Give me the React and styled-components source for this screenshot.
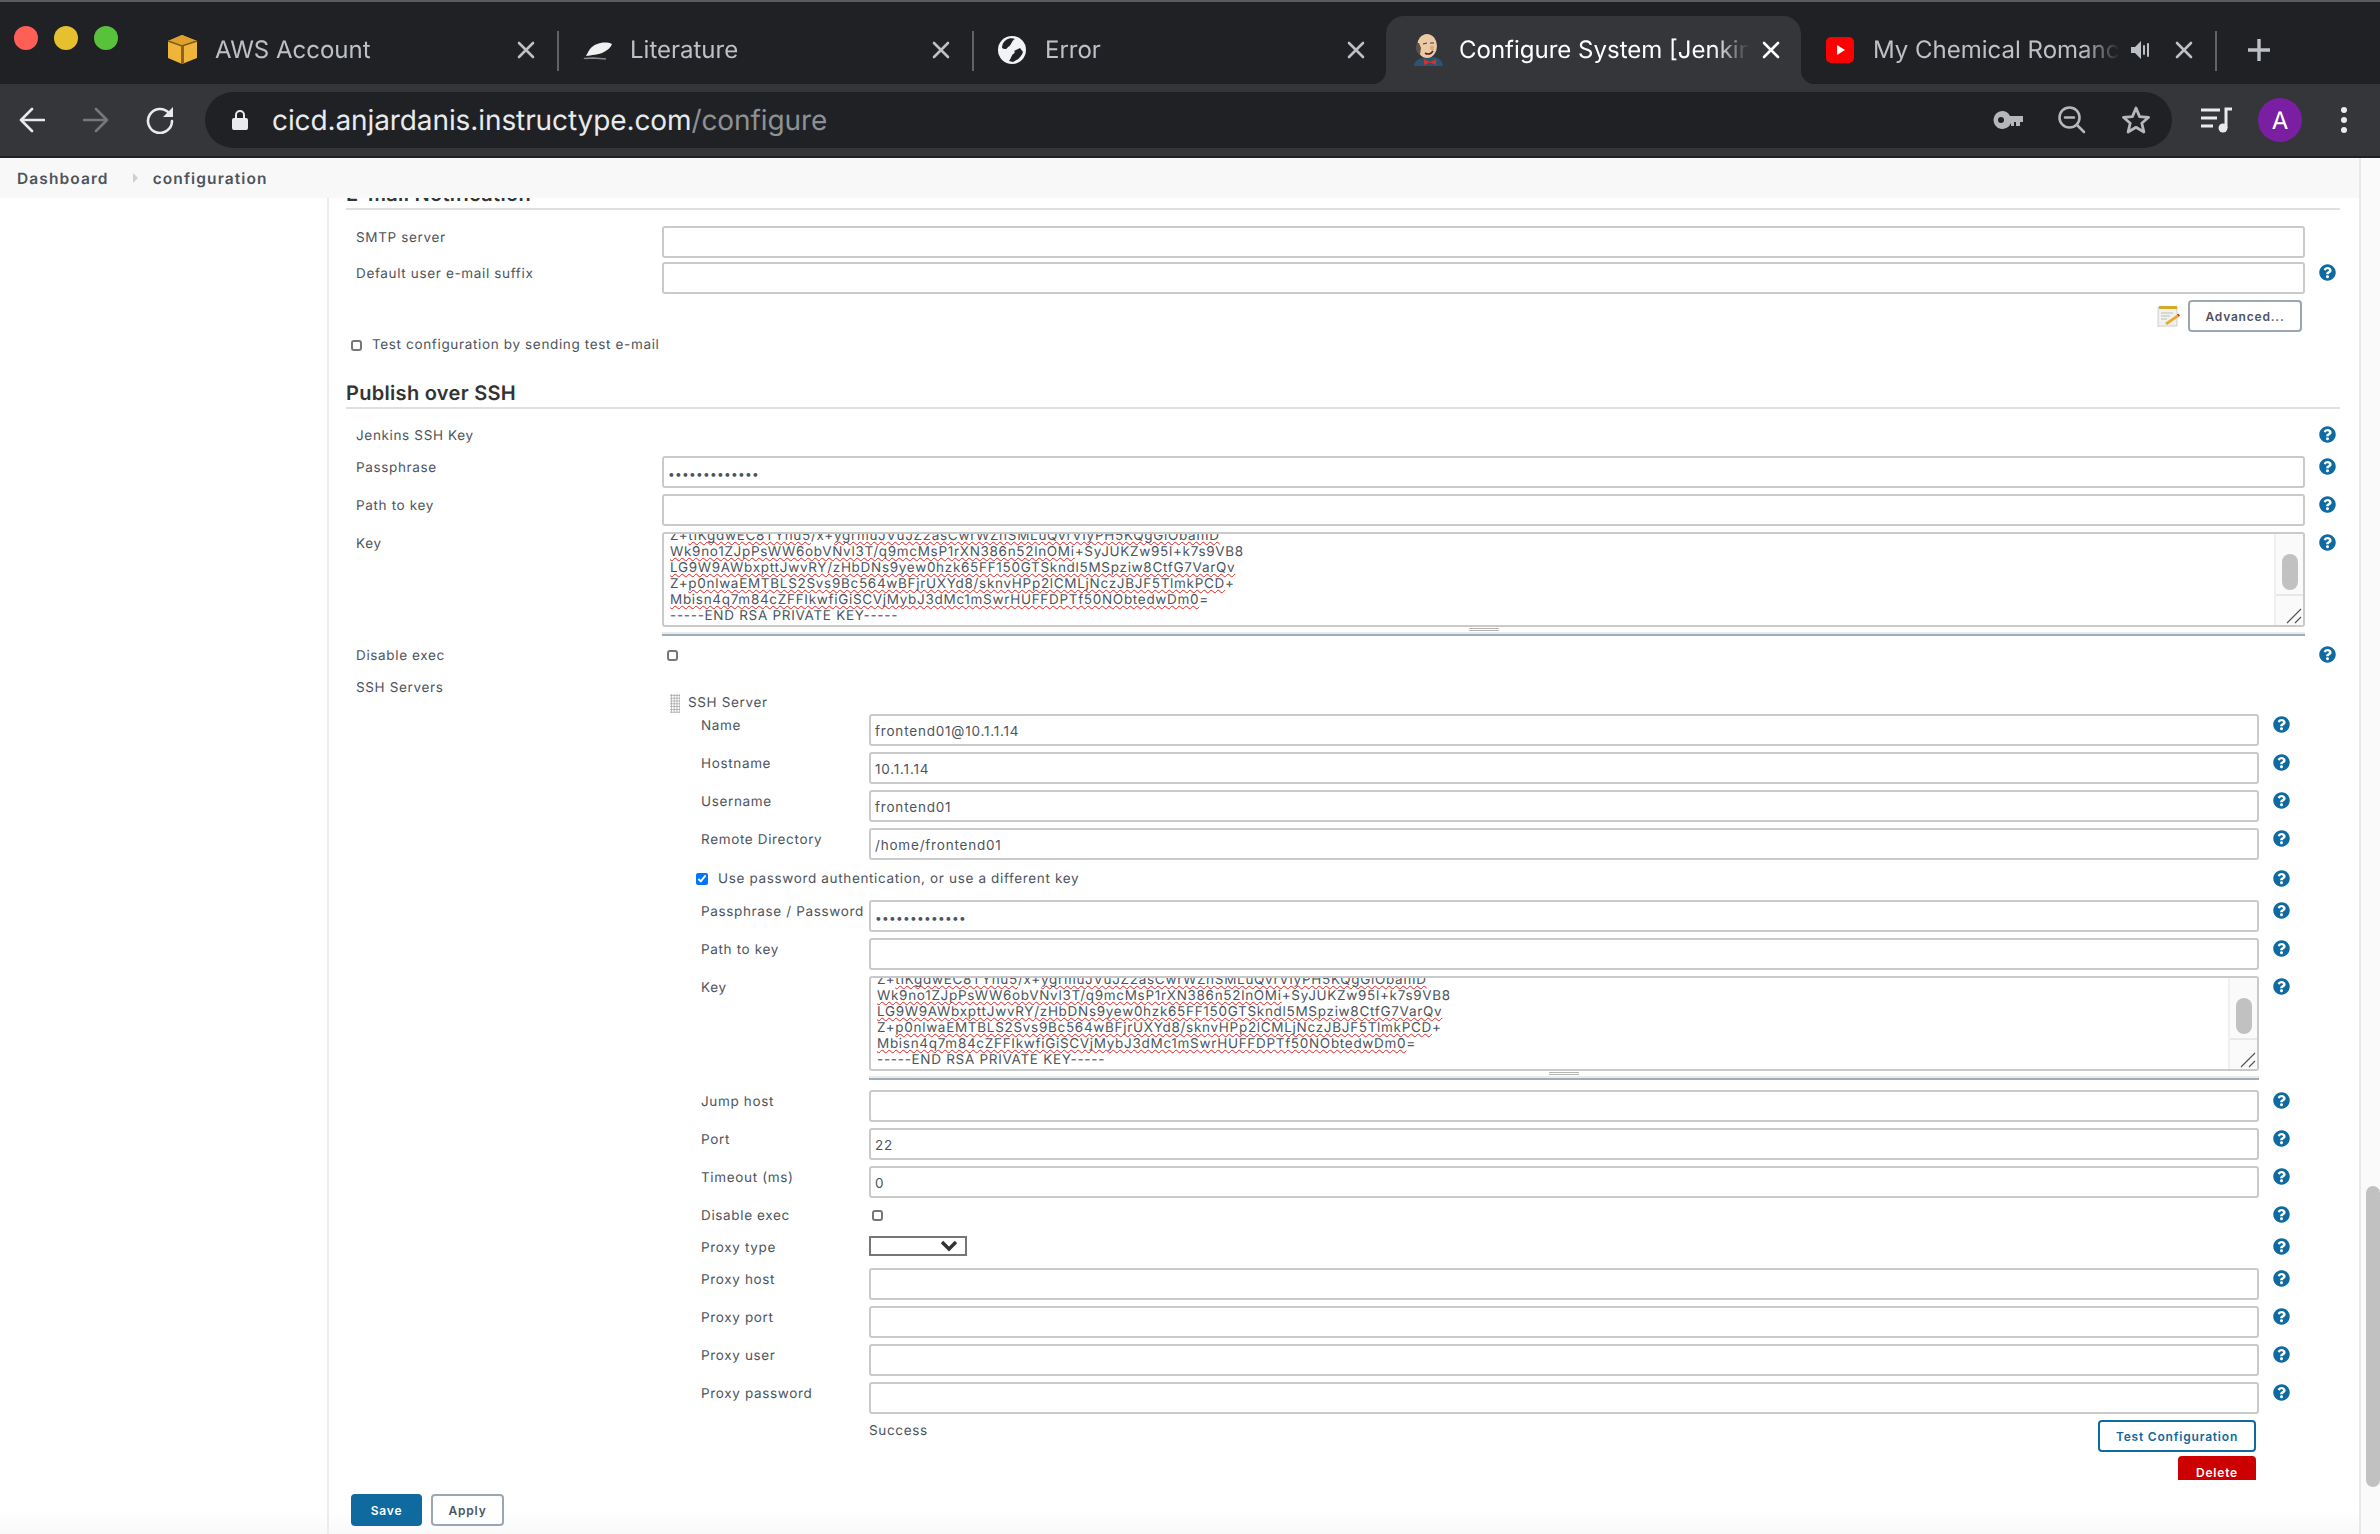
import React from 'react'
import styled, { createGlobalStyle } from 'styled-components'
import { FaQuestionCircle } from 'react-icons/fa'

const GlobalStyle = createGlobalStyle`
  html, body { margin: 0; padding: 0; background: #fff; }
  body {
    width: 2380px;
    height: 1534px;
    overflow: hidden;
    font-family: Inter, Roboto, "Liberation Sans", sans-serif;
    text-rendering: geometricPrecision;
  }
  * { box-sizing: border-box; }
`

const Window = styled.div`
  width: 2380px;
  height: 1534px;
  display: flex;
  flex-direction: column;
  overflow: hidden;
`

/* ---------- browser chrome ---------- */
const TabStrip = styled.div`
  height: 84px;
  flex: none;
  display: flex;
  align-items: flex-end;
  background: #202124;
  border-top: 2px solid #5c5c5e;
`
const Lights = styled.div`
  width: 141px;
  height: 66px;
  flex: none;
  display: flex;
  align-items: center;
  gap: 16px;
  padding: 0 0 26px 14px;
`
const Light = styled.span`
  width: 24px;
  height: 24px;
  border-radius: 50%;
  background: ${p => p.$color};
`
const Tab = styled.div`
  position: relative;
  width: ${p => p.$w || 415}px;
  height: 68px;
  flex: none;
  display: flex;
  align-items: center;
  padding: 0 20px 0 ${p => p.$left || 27}px;
  border-radius: 18px 18px 0 0;
  background: ${p => (p.$active ? '#35363a' : 'transparent')};
  color: ${p => (p.$active ? '#ffffff' : '#bdc1c6')};
  ${p =>
    p.$sep &&
    `&::after {
      content: '';
      position: absolute;
      right: -3px;
      top: 15px;
      height: 40px;
      width: 2px;
      background: #5f6368;
    }`}
  ${p =>
    p.$active &&
    `&::before {
      content: '';
      position: absolute;
      left: -14px;
      right: -14px;
      bottom: 0;
      height: 14px;
      background:
        radial-gradient(circle at 0 0, #202124 14px, #35363a 14.5px) left bottom / 14px 14px no-repeat,
        radial-gradient(circle at 100% 0, #202124 14px, #35363a 14.5px) right bottom / 14px 14px no-repeat;
    }`}
`
const Favicon = styled.svg`
  width: 28px;
  height: 32px;
  flex: none;
  margin-right: 19px;
  position: relative;
  overflow: visible;
`
const TabTitle = styled.span`
  flex: 1;
  min-width: 0;
  font-size: 24px;
  line-height: 32px;
  white-space: nowrap;
  overflow: hidden;
  position: relative;
  -webkit-mask-image: linear-gradient(to right, #000 calc(100% - 36px), transparent 100%);
  mask-image: linear-gradient(to right, #000 calc(100% - 36px), transparent 100%);
`
const TabIcon = styled.svg`
  width: 20px;
  height: 24px;
  flex: none;
  position: relative;
  margin-left: ${p => p.$gap || 12}px;
`
const Toolbar = styled.div`
  height: 74px;
  flex: none;
  display: flex;
  align-items: flex-start;
  padding-top: 8px;
  background: #35363a;
  border-bottom: 2px solid #202124;
`
const NavBtn = styled.span`
  width: ${p => p.$w || 64}px;
  height: 56px;
  flex: none;
  display: flex;
  align-items: center;
  justify-content: center;
  color: ${p => p.$color || '#e8eaed'};
`
const NewTab = styled(NavBtn)`
  align-self: flex-start;
  margin-top: 20px;
`
const Omnibox = styled.div`
  width: 1967px;
  height: 56px;
  margin-left: 13px;
  flex: none;
  display: flex;
  align-items: center;
  padding: 0 4px 0 27px;
  border-radius: 28px;
  background: #202124;
`
const Url = styled.div`
  flex: 1;
  margin-left: 24px;
  font-size: 28px;
  letter-spacing: -0.1px;
  color: #e8eaed;
  white-space: nowrap;
  span { color: #8d9196; }
`
const ToolRight = styled.div`
  margin-left: 12px;
  display: flex;
`
const Avatar = styled.span`
  width: 44px;
  height: 44px;
  border-radius: 50%;
  display: flex;
  align-items: center;
  justify-content: center;
  background: #7b1fa2;
  color: #fff;
  font-size: 24px;
`

/* ---------- page ---------- */
const PageArea = styled.div`
  flex: 1;
  min-height: 0;
  display: flex;
`
const Page = styled.div`
  flex: 1;
  min-width: 0;
  display: flex;
  flex-direction: column;
`
const ScrollTrack = styled.div`
  width: 21px;
  flex: none;
  padding: 1028px 0 0 5px;
  background: #fafafa;
  border-left: 2px solid #e8e8e8;
`
const ScrollThumb = styled.div`
  width: 14px;
  height: 301px;
  border-radius: 7px;
  background: #c1c1c1;
`
const Breadcrumbs = styled.div`
  height: 40px;
  flex: none;
  display: flex;
  align-items: center;
  padding-left: 17px;
  background: #f8f8f8;
  color: #4d545d;
  font-size: 15.5px;
  font-weight: 600;
  letter-spacing: 1.1px;
`
const CrumbSep = styled.svg`
  width: 5px;
  height: 10px;
  margin: 0 15px 0 24px;
`
const Body = styled.div`
  flex: 1;
  min-height: 0;
  display: flex;
  overflow: hidden;
  background: linear-gradient(to bottom, #fff calc(100% - 24px), #f9f9f9 100%);
`
const Side = styled.div`
  width: 329px;
  flex: none;
  border-right: 2px solid #e9edf0;
`
const Content = styled.div`
  flex: 1;
  min-width: 0;
  padding: 0 19px 0 17px;
  color: #4d545d;
  font-size: 13.5px;
  letter-spacing: 0.65px;
`
const SectionTitle = styled.h3`
  height: 31px;
  margin: ${p => p.$top}px 0 0;
  font-size: 20px;
  font-weight: 600;
  line-height: 31px;
  letter-spacing: 0.3px;
  color: #333;
  border-bottom: 2px solid #e0e0e0;
`
const Row = styled.div`
  display: grid;
  grid-template-columns: ${p => (p.$nested ? '207px minmax(0, 1fr) 81px' : '316px minmax(0, 1fr) 35px')};
  min-height: 22px;
  margin-top: ${p => p.$top ?? 6}px;
`
const Label = styled.div`
  height: 22px;
  padding: 1px 0 0 ${p => (p.$nested ? 39 : 10)}px;
  line-height: 22px;
  white-space: nowrap;
`
const Help = styled(FaQuestionCircle)`
  width: 17px;
  height: 17px;
  margin: 2px 0 0 14px;
  color: #0f6aa0;
`
const TextInput = styled.input`
  display: block;
  width: 100%;
  height: 32px;
  padding: 2px 4px 0;
  font: inherit;
  letter-spacing: 0.8px;
  color: #4d545d;
  background: #fff;
  border: 2px solid #cacaca;
  border-radius: 3px;
  outline: none;
  &[type='password'] {
    font-size: 12px;
    letter-spacing: 0.25px;
  }
`
const CheckBox = styled.input`
  appearance: ${p => (p.checked ? 'auto' : 'none')};
  width: ${p => (p.checked ? 12 : 11)}px;
  height: ${p => (p.checked ? 12 : 11)}px;
  margin: ${p => p.$margin};
  accent-color: #0075ff;
  flex: none;
  ${p => !p.checked && 'border: 2px solid #777; border-radius: 3px; background: #fff;'}
`
const CheckLine = styled.div`
  grid-column: ${p => p.$span || 'auto'};
  display: flex;
  align-items: center;
  height: 22px;
  padding-left: ${p => p.$left || 0}px;
`
const KeyBox = styled.div`
  height: 95px;
  display: flex;
  overflow: hidden;
  background: #fff;
  border: 2px solid #cacaca;
  border-radius: 3px;
`
const KeyText = styled.div`
  flex: 1;
  min-width: 0;
  margin-top: -6px;
  padding-left: 6px;
  color: #4d545d;
  font-size: 13.5px;
  line-height: 16px;
  letter-spacing: 0.7px;
  white-space: nowrap;
  overflow: hidden;
`
const Spell = styled.span`
  text-decoration: underline wavy #e02020 1px;
  text-underline-offset: 1px;
  text-decoration-skip-ink: none;
`
const KeyRail = styled.div`
  width: 29px;
  flex: none;
  display: flex;
  flex-direction: column;
  background: #fafafa;
  border-left: 2px solid #f0f0f0;
`
const KeyRailTrack = styled.div`
  height: 62px;
  padding: 20px 0 0 6px;
  border-bottom: 2px solid #e8e8e8;
`
const KeyRailThumb = styled.div`
  width: 16px;
  height: 36px;
  border-radius: 8px;
  background: #c1c1c1;
`
const KeyRailCorner = styled.div`
  flex: 1;
  display: flex;
  justify-content: flex-end;
  align-items: flex-end;
  padding: 0 1px 1px 0;
`
const Handle = styled.div`
  height: 4px;
  margin-top: 5px;
  display: flex;
  justify-content: center;
  background: #e8edf0;
  border-bottom: 2px solid #a0adb8;
`
const HandleGrip = styled.span`
  width: 30px;
  height: 3px;
  margin-top: -4px;
  border-top: 1px solid #b4b4b4;
  border-bottom: 1px solid #b4b4b4;
`
const ActionLine = styled.div`
  display: flex;
  justify-content: flex-end;
  align-items: center;
  grid-column: 2;
  padding-right: 3px;
  gap: 8px;
`
const Button = styled.button`
  height: 32px;
  width: ${p => p.$w}px;
  padding: 0;
  font-family: Inter, Roboto, sans-serif;
  font-size: 12px;
  font-weight: 600;
  letter-spacing: 0.8px;
  border-radius: 4px;
  color: ${p => p.$color};
  background: ${p => p.$bg || '#fff'};
  border: 2px solid ${p => p.$line};
`
const Nested = styled.div`
  grid-column: 2 / 4;
  margin-top: 16px;
`
const ServerHead = styled.div`
  height: 22px;
  display: flex;
  align-items: center;
  margin-left: 8px;
  gap: 8px;
  line-height: 22px;
`
const Grip = styled.span`
  width: 10px;
  height: 19px;
  background-image: radial-gradient(circle, #a8a8a8 0.9px, transparent 1.1px);
  background-size: 2.8px 2.8px;
`
const SelectWrap = styled.div`
  position: relative;
  width: 98px;
  height: 20px;
`
const ProxySelect = styled.select`
  width: 100%;
  height: 100%;
  display: block;
  appearance: none;
  background: #fff;
  border: 2px solid #767676;
  outline: none;
`
const SelectChevron = styled.svg`
  position: absolute;
  right: 8px;
  top: 4px;
  width: 20px;
  height: 12px;
`
const ResultLine = styled.div`
  grid-column: 2;
  display: flex;
  justify-content: space-between;
  padding-right: 3px;
  line-height: 22px;
`
const DeleteClip = styled.div`
  grid-column: 2;
  height: 24px;
  overflow: hidden;
  display: flex;
  justify-content: flex-end;
  padding-right: 3px;
`
const BottomBar = styled.div`
  display: flex;
  gap: 9px;
  margin-top: 14px;
  padding-left: 5px;
`

/* ---------- drawings ---------- */
const stroke = { fill: 'none', stroke: 'currentColor', strokeLinecap: 'round', strokeLinejoin: 'round' }

const CloseIcon = ({ color, gap }) => (
  <TabIcon $gap={gap} viewBox="0 0 20 24" style={{ color }}>
    <path d="M3 5 L17 19 M17 5 L3 19" {...stroke} strokeWidth="2.6" />
  </TabIcon>
)
const AwsIcon = () => (
  <Favicon viewBox="0 0 28 32">
    <path d="M0 7 L14 1 L29 7 V24 L14 30 L0 24 Z" fill="#f0b43a" />
    <path d="M0 7 L14 1 L29 7 L14 12 Z" fill="#dfa02e" />
    <path d="M0 7 L14 12 L29 7" fill="none" stroke="#7a5a1e" strokeWidth="1.4" />
    <path d="M14.5 12 V30" stroke="#8a6522" strokeWidth="3" />
  </Favicon>
)
const FeatherIcon = () => (
  <Favicon viewBox="0 0 28 32">
    <path d="M29 10 C22 7 12 9 7 15 C5 18 4 20 3 22 C8 21 16 21 21 18 C25 16 28 13 29 10 Z" fill="#f1f1f1" />
    <path d="M1 24 C2 25 5 24 10 24 L23 25" fill="none" stroke="#8a8a8a" strokeWidth="1.5" />
  </Favicon>
)
const GlobeIcon = () => (
  <Favicon viewBox="0 0 28 32">
    <circle cx="14" cy="16" r="14" fill="#f1f3f4" />
    <path d="M8 6 C11 4 14 4 17 5 C13 7 14 11 10 13 C9 15 7 16 4 14 C4 11 5 8 8 6 Z" fill="#202124" />
    <path d="M22 14 L25 18 C24 22 20 26 15 28 L11 27 C13 25 13 22 15 20 C17 20 17 17 16 17 C18 16 20 15 22 14 Z" fill="#202124" />
  </Favicon>
)
const JenkinsIcon = () => (
  <Favicon viewBox="0 0 28 32">
    <path d="M2 32 C2 27 7 24 12 24 L22 23 C27 24 31 27 31 32 Z" fill="#2b5470" />
    <ellipse cx="15" cy="12" rx="10" ry="12" fill="#eccaa6" />
    <path d="M5 9 C3 13 4 19 8 21 L9 14 L7 9 Z" fill="#5a5048" />
    <path d="M11 10 L15 9 M18 9 L22 9" stroke="#4a3a30" strokeWidth="1.2" />
    <ellipse cx="20" cy="14" rx="2" ry="2.4" fill="#d9a98a" />
    <path d="M13 19 C16 21 19 20 21 17" stroke="#522" strokeWidth="1.6" fill="none" />
    <path d="M12 25 L18 28 L24 25 V31 L18 28.5 L12 31 Z" fill="#d6302b" />
  </Favicon>
)
const YoutubeIcon = () => (
  <Favicon viewBox="0 0 28 32">
    <rect x="0" y="3" width="28" height="26" rx="5" fill="#ff0000" />
    <path d="M11 11 L19 16 L11 21 Z" fill="#fff" />
  </Favicon>
)
const SpeakerIcon = () => (
  <TabIcon $gap={10} viewBox="0 0 20 24" style={{ color: '#bdc1c6' }}>
    <path d="M1 9 H5 L11 3 V21 L5 15 H1 Z" fill="currentColor" />
    <path d="M14 8 V16 M18 6 V18" {...stroke} strokeWidth="2" />
  </TabIcon>
)
const BackIcon = () => (
  <svg width="26" height="26" viewBox="0 0 26 26">
    <path d="M25 13 H2 M13 2 L2 13 L13 24" {...stroke} strokeWidth="2.6" />
  </svg>
)
const ForwardIcon = () => (
  <svg width="26" height="26" viewBox="0 0 26 26">
    <path d="M1 13 H24 M13 2 L24 13 L13 24" {...stroke} strokeWidth="2.6" />
  </svg>
)
const ReloadIcon = () => (
  <svg width="28" height="28" viewBox="0 0 28 28">
    <path d="M23 7 A12 12 0 1 0 26 15" {...stroke} strokeWidth="2.6" />
    <path d="M27 1 V11 H17 Z" fill="currentColor" />
  </svg>
)
const LockIcon = () => (
  <svg width="16" height="20" viewBox="0 0 16 20">
    <path d="M4 9 V5 A4 4 0 0 1 12 5 V9" fill="none" stroke="#e8eaed" strokeWidth="2" />
    <rect x="0" y="8" width="16" height="12" rx="2" fill="#e8eaed" />
  </svg>
)
const KeyIcon = () => (
  <svg width="30" height="18" viewBox="0 0 30 18">
    <path d="M9 0 A9 9 0 0 1 17 5 H30 V11 H27 V15 H23 V11 H21 V15 H18 V12 A9 9 0 1 1 9 0 Z M8 6 A3 3 0 1 0 8 12 A3 3 0 1 0 8 6 Z" fill="#b5b7ba" fillRule="evenodd" />
  </svg>
)
const ZoomIcon = () => (
  <svg width="28" height="28" viewBox="0 0 28 28" style={{ color: '#b5b7ba' }}>
    <circle cx="11.5" cy="11.5" r="10" {...stroke} strokeWidth="2.6" />
    <path d="M19 19 L26 26 M7 11.5 H16" {...stroke} strokeWidth="2.6" />
  </svg>
)
const StarIcon = () => (
  <svg width="30" height="30" viewBox="0 0 30 30" style={{ color: '#b5b7ba' }}>
    <path d="M15 3 L18.6 11.6 L27.6 12.3 L20.8 18.2 L22.9 27 L15 22.3 L7.1 27 L9.2 18.2 L2.4 12.3 L11.4 11.6 Z" {...stroke} strokeWidth="2.8" />
  </svg>
)
const MediaIcon = () => (
  <svg width="32" height="26" viewBox="0 0 32 26">
    <path d="M1 3 H20 M1 11 H17 M1 19 H13" {...stroke} stroke="#e8eaed" strokeWidth="3.2" strokeLinecap="butt" />
    <path d="M26 21 V2 H32" fill="none" stroke="#e8eaed" strokeWidth="3" />
    <circle cx="23" cy="21" r="4.5" fill="#e8eaed" />
  </svg>
)
const DotsIcon = () => (
  <svg width="8" height="28" viewBox="0 0 8 28">
    <circle cx="4" cy="4" r="3" fill="#e8eaed" />
    <circle cx="4" cy="14" r="3" fill="#e8eaed" />
    <circle cx="4" cy="24" r="3" fill="#e8eaed" />
  </svg>
)
const NotepadIcon = () => (
  <svg width="23" height="23" viewBox="0 0 23 23">
    <path d="M1 2 H20 V21 H2 L1 22 Z" fill="#f1f1ee" stroke="#c5c5c5" strokeWidth="0.8" />
    <rect x="2" y="1" width="18" height="3" fill="#d6a928" />
    <path d="M4 8 H16 M4 11 H13 M4 14 H10" stroke="#bdbdbd" strokeWidth="1" />
    <path d="M8 18 L21 9 L23 11 L10 20 Z" fill="#eba72f" />
    <path d="M20 9.6 L21.4 8.6 L23 10.6 L21.6 11.6 Z" fill="#d9382c" />
  </svg>
)
const ResizeGrip = () => (
  <svg width="16" height="16" viewBox="0 0 16 16">
    <path d="M1 15 L15 1 M9 15 L15 9" stroke="#555" strokeWidth="1.2" fill="none" />
  </svg>
)

/* ---------- page parts ---------- */
const KeyField = () => (
  <div>
    <KeyBox>
      <KeyText>
        <div>Z+<Spell>tIKgdwEC8TYhu5</Spell>/x+<Spell>ygrmuJVuJZ2asCwrWZnSMLuQvrVIyPH5KQgGlObaIIID</Spell></div>
        <div><Spell>Wk9no1ZJpPsWW6obVNvl3T/q9mcMsP1rXN386n52lnOMi</Spell>+SyJUKZw95l+k7s9VB8</div>
        <div><Spell>LG9W9AWbxpttJwvRY/zHbDNs9yew0hzk65FF150GTSkndl5MSpziw8CtfG7VarQv</Spell></div>
        <div>Z+<Spell>p0nlwaEMTBLS2Svs9Bc564wBFjrUXYd8/sknvHPp2lCMLjNczJBJF5TlmkPCD</Spell>+</div>
        <div><Spell>Mbisn4q7m84cZFFIkwfiGiSCVjMybJ3dMc1mSwrHUFFDPTf50NObtedwDm0</Spell>=</div>
        <div>-----END RSA PRIVATE KEY-----</div>
      </KeyText>
      <KeyRail>
        <KeyRailTrack><KeyRailThumb /></KeyRailTrack>
        <KeyRailCorner><ResizeGrip /></KeyRailCorner>
      </KeyRail>
    </KeyBox>
    <Handle><HandleGrip /></Handle>
  </div>
)

const InputRow = ({ nested, top, label, value = '', password, help = true }) => (
  <Row $nested={nested} $top={top}>
    <Label $nested={nested}>{label}</Label>
    <TextInput readOnly type={password ? 'password' : 'text'} value={value} />
    {help && <Help />}
  </Row>
)

const SECRET = 'abcdefghijklm'

const App = () => (
  <Window>
    <GlobalStyle />
    <TabStrip>
      <Lights>
        <Light $color="#ff5f57" />
        <Light $color="#e6c02f" />
        <Light $color="#58c33a" />
      </Lights>
      <Tab $sep>
        <AwsIcon />
        <TabTitle>AWS Account</TabTitle>
        <CloseIcon />
      </Tab>
      <Tab $sep>
        <FeatherIcon />
        <TabTitle>Literature</TabTitle>
        <CloseIcon />
      </Tab>
      <Tab>
        <GlobeIcon />
        <TabTitle>Error</TabTitle>
        <CloseIcon />
      </Tab>
      <Tab $active $left={26}>
        <JenkinsIcon />
        <TabTitle>Configure System [Jenkins]</TabTitle>
        <CloseIcon color="#fff" />
      </Tab>
      <Tab $sep $w={413} $left={25}>
        <YoutubeIcon />
        <TabTitle>My Chemical Romance - Helena</TabTitle>
        <SpeakerIcon />
        <CloseIcon gap={24} />
      </Tab>
      <NewTab $w={90}>
        <svg width="24" height="24" viewBox="0 0 24 24">
          <path d="M12 1 V23 M1 12 H23" stroke="#bdc1c6" strokeWidth="3.4" />
        </svg>
      </NewTab>
    </TabStrip>

    <Toolbar>
      <NavBtn><BackIcon /></NavBtn>
      <NavBtn $color="#75777b"><ForwardIcon /></NavBtn>
      <NavBtn><ReloadIcon /></NavBtn>
      <Omnibox>
        <LockIcon />
        <Url>cicd.anjardanis.instructype.com<span>/configure</span></Url>
        <NavBtn><KeyIcon /></NavBtn>
        <NavBtn><ZoomIcon /></NavBtn>
        <NavBtn><StarIcon /></NavBtn>
      </Omnibox>
      <ToolRight>
        <NavBtn><MediaIcon /></NavBtn>
        <NavBtn><Avatar>A</Avatar></NavBtn>
        <NavBtn><DotsIcon /></NavBtn>
      </ToolRight>
    </Toolbar>

    <PageArea>
      <Page>
        <Breadcrumbs>
          Dashboard
          <CrumbSep viewBox="0 0 5 10">
            <path d="M0 0 L5 5 L0 10 Z" fill="#cfcfcf" />
          </CrumbSep>
          configuration
        </Breadcrumbs>
        <Body>
          <Side />
          <Content>
            <SectionTitle $top={-19}>E-mail Notification</SectionTitle>
            <InputRow top={16} label="SMTP server" help={false} />
            <InputRow top={4} label="Default user e-mail suffix" />
            <Row>
              <ActionLine>
                <NotepadIcon />
                <Button $w={114} $color="#4d545d" $line="#9aa7b3">Advanced...</Button>
              </ActionLine>
            </Row>
            <Row $top={2}>
              <CheckLine $span="1 / 3" $left={5}>
                <CheckBox type="checkbox" readOnly $margin="0 10px 0 0" />
                Test configuration by sending test e-mail
              </CheckLine>
            </Row>

            <SectionTitle $top={22}>Publish over SSH</SectionTitle>
            <Row $top={15}>
              <Label>Jenkins SSH Key</Label>
              <div />
              <Help />
            </Row>
            <InputRow top={10} label="Passphrase" password value={SECRET} />
            <InputRow label="Path to key" />
            <Row>
              <Label>Key</Label>
              <KeyField />
              <Help />
            </Row>
            <Row $top={8}>
              <Label>Disable exec</Label>
              <CheckLine><CheckBox type="checkbox" readOnly $margin="0 0 0 5px" /></CheckLine>
              <Help />
            </Row>
            <Row $top={10}>
              <Label>SSH Servers</Label>
              <Nested>
                <ServerHead><Grip />SSH Server</ServerHead>
                <InputRow nested top={0} label="Name" value="frontend01@10.1.1.14" />
                <InputRow nested label="Hostname" value="10.1.1.14" />
                <InputRow nested label="Username" value="frontend01" />
                <InputRow nested label="Remote Directory" value="/home/frontend01" />
                <Row $nested $top={8}>
                  <CheckLine $span="1 / 3" $left={34}>
                    <CheckBox type="checkbox" readOnly checked $margin="0 10px 0 0" />
                    Use password authentication, or use a different key
                  </CheckLine>
                  <Help />
                </Row>
                <InputRow nested top={10} label="Passphrase / Password" password value={SECRET} />
                <InputRow nested label="Path to key" />
                <Row $nested>
                  <Label $nested>Key</Label>
                  <KeyField />
                  <Help />
                </Row>
                <InputRow nested top={10} label="Jump host" />
                <InputRow nested label="Port" value="22" />
                <InputRow nested label="Timeout (ms)" value="0" />
                <Row $nested>
                  <Label $nested>Disable exec</Label>
                  <CheckLine><CheckBox type="checkbox" readOnly $margin="0 0 0 3px" /></CheckLine>
                  <Help />
                </Row>
                <Row $nested $top={10}>
                  <Label $nested>Proxy type</Label>
                  <SelectWrap>
                    <ProxySelect />
                    <SelectChevron viewBox="0 0 20 12">
                      <path d="M3 2 L10 9 L17 2" fill="none" stroke="#333" strokeWidth="3.4" />
                    </SelectChevron>
                  </SelectWrap>
                  <Help />
                </Row>
                <InputRow nested top={10} label="Proxy host" />
                <InputRow nested label="Proxy port" />
                <InputRow nested label="Proxy user" />
                <InputRow nested label="Proxy password" />
                <Row $nested>
                  <ResultLine>
                    Success
                    <Button $w={158} $color="#0f6aa0" $line="#0f6aa0">Test Configuration</Button>
                  </ResultLine>
                </Row>
                <Row $nested $top={4}>
                  <DeleteClip>
                    <Button $w={78} $color="#fff" $bg="#cc0000" $line="#cc0000">Delete</Button>
                  </DeleteClip>
                </Row>
              </Nested>
            </Row>
            <BottomBar>
              <Button $w={71} $color="#fff" $bg="#0f6aa0" $line="#0f6aa0">Save</Button>
              <Button $w={73} $color="#4d545d" $line="#9aa7b3">Apply</Button>
            </BottomBar>
          </Content>
        </Body>
      </Page>
      <ScrollTrack><ScrollThumb /></ScrollTrack>
    </PageArea>
  </Window>
)

export default App
